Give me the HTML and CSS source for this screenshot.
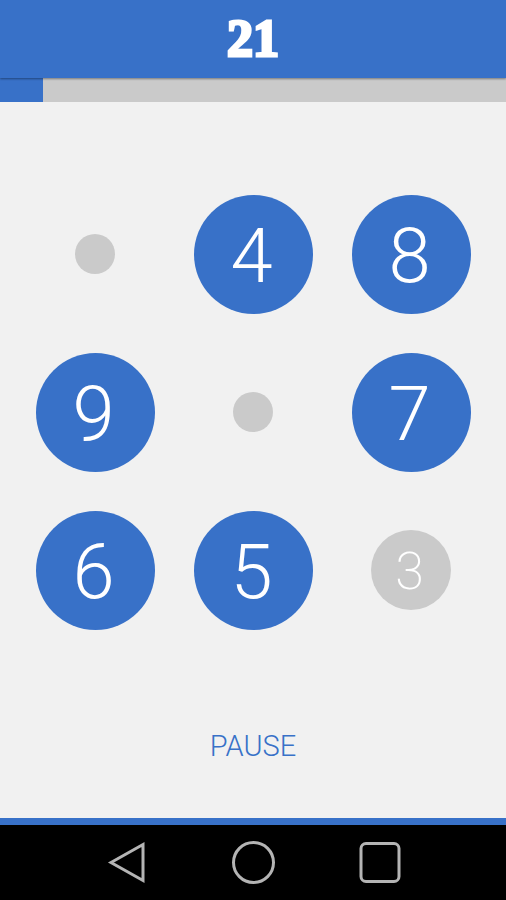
FILE: index.html
```html
<!DOCTYPE html>
<html lang="en">
<head>
  <meta charset="utf-8">
  <meta name="viewport" content="width=device-width, initial-scale=1">
  <title>Numbers</title>
  <link rel="stylesheet" href="styles.css">
</head>
<body>
  <header class="header">
    <h1 class="score">21</h1>
  </header>
  <div class="progress" role="progressbar" aria-label="Time" aria-valuemin="0" aria-valuemax="100" aria-valuenow="8.5">
    <div class="progress-fill" style="width: 8.5%"></div>
  </div>
  <main class="game">
    <div class="board">
      <span class="dot"></span>
      <button class="tile" type="button">4</button>
      <button class="tile" type="button">8</button>
      <button class="tile" type="button">9</button>
      <span class="dot"></span>
      <button class="tile" type="button">7</button>
      <button class="tile" type="button">6</button>
      <button class="tile" type="button">5</button>
      <button class="tile tile-used" type="button">3</button>
    </div>
    <button class="pause" type="button">PAUSE</button>
  </main>
  <nav class="system-bar" aria-label="System">
    <button class="system-button" type="button" aria-label="Back">
      <svg width="44" height="44" viewBox="0 0 44 44"><path d="M6 21.500 38 3.500v36Z"/></svg>
    </button>
    <button class="system-button" type="button" aria-label="Home">
      <svg width="44" height="44" viewBox="0 0 44 44"><circle cx="22.500" cy="21.500" r="20"/></svg>
    </button>
    <button class="system-button" type="button" aria-label="Recent apps">
      <svg width="44" height="44" viewBox="0 0 44 44"><rect x="4" y="2.500" width="38" height="38" rx="5"/></svg>
    </button>
  </nav>
</body>
</html>
```

FILE: styles.css
```css
:root {
  --blue: #3871c8;
  --gray: #cacaca;
  --paper: #f1f1f1;
}

* {
  box-sizing: border-box;
}

body {
  display: flex;
  flex-direction: column;
  min-height: 100vh;
  margin: 0;
  background: var(--paper);
  font-family: Roboto, "Liberation Sans", sans-serif;
}

button {
  padding: 0;
  border: 0;
  background: none;
  font-family: inherit;
  cursor: pointer;
}

.header {
  position: relative;
  display: flex;
  align-items: center;
  justify-content: center;
  height: 78px;
  background: var(--blue);
  box-shadow: 0 1px 2px rgba(0, 0, 0, 0.4);
}

.score {
  margin: 0;
  color: #fff;
  font: 700 52px/60px "Liberation Serif", serif;
  -webkit-text-stroke: 3px #fff;
}

.progress {
  height: 24px;
  background: var(--gray);
}

.progress-fill {
  height: 100%;
  background: var(--blue);
}

.game {
  display: flex;
  flex: 1;
  flex-direction: column;
  align-items: center;
  padding: 73px 16px 48px;
  border-bottom: 7px solid var(--blue);
}

.board {
  display: grid;
  grid-template-columns: repeat(3, 1fr);
  grid-auto-rows: 158px;
  place-items: center;
  width: 100%;
}

.tile {
  width: 119px;
  height: 119px;
  padding: 4px 3px 0 0;
  border-radius: 50%;
  background: var(--blue);
  color: #fff;
  font-family: "Roboto Slab", Roboto, sans-serif;
  font-size: 76px;
  font-weight: 300;
  line-height: 1;
}

.tile-used {
  width: 80px;
  height: 80px;
  background: var(--gray);
  font-size: 52px;
  font-weight: 200;
}

.dot {
  width: 40px;
  height: 40px;
  border-radius: 50%;
  background: var(--gray);
}

.pause {
  height: 48px;
  margin-top: 73px;
  padding: 0 16px;
  color: var(--blue);
  font-size: 29px;
  font-weight: 300;
}

.system-bar {
  display: flex;
  align-items: center;
  justify-content: center;
  gap: 82px;
  height: 75px;
  background: #000;
}

.system-button {
  width: 44px;
  height: 44px;
}

.system-button svg {
  display: block;
  fill: none;
  stroke: #b4b4b4;
  stroke-width: 3;
}
```
